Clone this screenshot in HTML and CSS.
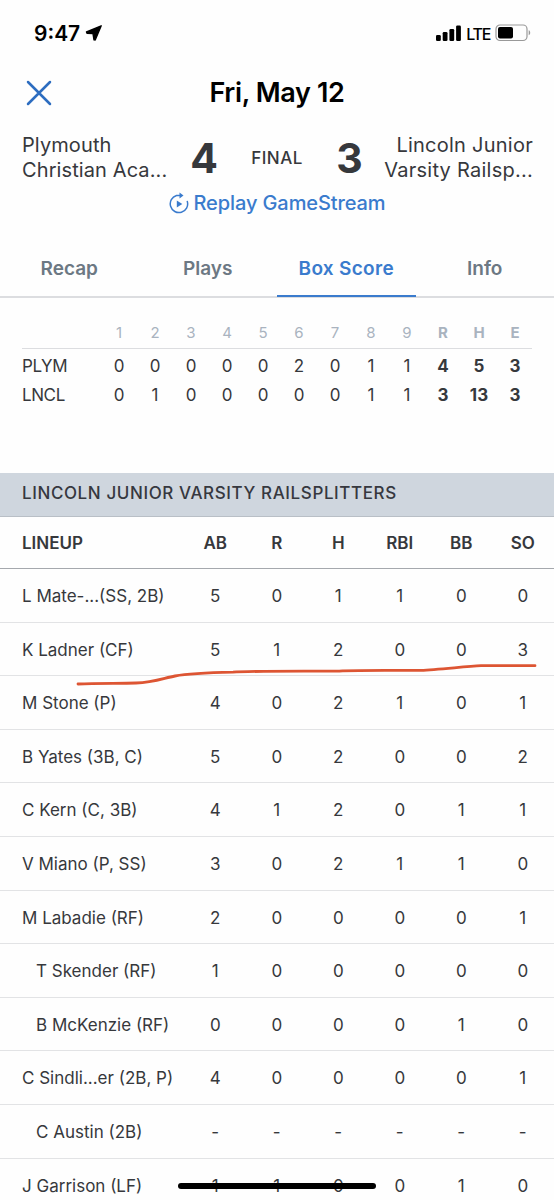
FILE: index.html
```html
<!DOCTYPE html>
<html lang="en">
<head>
    <meta charset="UTF-8">
    <meta name="viewport" content="width=device-width, initial-scale=1.0">
    <title>Box Score</title>
    <link rel="stylesheet" href="styles.css">
</head>
<body>

<div class="screen">
    <div class="status-bar">
        <div class="status-left">
            <span class="time">9:47</span>
            <svg width="18" height="18" viewBox="0 0 18 18"><path d="M16.200 1.800 1.500 8 2 9.300 8 9.600 9 15.900 10.200 16Z" fill="#000" stroke="#000" stroke-width="1.400" stroke-linejoin="round"/></svg>
        </div>
        <div class="status-right">
            <svg width="25" height="16" viewBox="0 0 25 16"><rect x="0" y="10" width="4.800" height="6" rx="1.300"/><rect x="6.700" y="7" width="4.800" height="9" rx="1.300"/><rect x="13.400" y="4" width="4.800" height="12" rx="1.300"/><rect x="20.100" y="0.500" width="4.800" height="15.500" rx="1.300"/></svg>
            <span class="network">LTE</span>
            <svg width="36" height="18" viewBox="0 0 36 18"><rect x="1" y="1" width="31" height="15.500" rx="4" fill="none" stroke="#999" stroke-width="1.200"/><rect x="3" y="3" width="15" height="11.500" rx="2"/><path d="M33.700 6.300c2 .6 2 4.300 0 5z" fill="#999"/></svg>
        </div>
    </div>

    <div class="title-bar">
        <svg class="close" width="26" height="26" viewBox="0 0 26 26"><path d="M2 2 24 24M24 2 2 24" fill="none" stroke="#2d6dc0" stroke-width="2.500" stroke-linecap="round"/></svg>
        <h1>Fri, May 12</h1>
    </div>

    <div class="matchup">
        <div class="team">Plymouth<br>Christian Aca...</div>
        <div class="score">4</div>
        <div class="final">FINAL</div>
        <div class="score">3</div>
        <div class="team home">Lincoln Junior<br>Varsity Railsp...</div>
    </div>

    <div class="replay">
        <svg width="20" height="22" viewBox="0 0 20 22"><path d="M18.300 9.400A8.700 8.700 0 1 1 7.500 3.500H11" fill="none" stroke="#3a7bcd" stroke-width="1.500" stroke-linecap="round"/><path d="M10.500 .5 14.500 3.500 10.500 6.500z" fill="#3a7bcd"/><path d="M7.800 8.500 13.300 12 7.800 15.500z" fill="#3a7bcd"/></svg>
        <span>Replay GameStream</span>
    </div>

    <div class="tabs">
        <div class="tab">Recap</div>
        <div class="tab">Plays</div>
        <div class="tab active">Box Score</div>
        <div class="tab">Info</div>
    </div>

    <div class="linescore">
        <div class="line head"><span></span><span>1</span><span>2</span><span>3</span><span>4</span><span>5</span><span>6</span><span>7</span><span>8</span><span>9</span><b>R</b><b>H</b><b>E</b></div>
        <div class="line"><span class="abbr">PLYM</span><span>0</span><span>0</span><span>0</span><span>0</span><span>0</span><span>2</span><span>0</span><span>1</span><span>1</span><b>4</b><b>5</b><b>3</b></div>
        <div class="line"><span class="abbr">LNCL</span><span>0</span><span>1</span><span>0</span><span>0</span><span>0</span><span>0</span><span>0</span><span>1</span><span>1</span><b>3</b><b>13</b><b>3</b></div>
    </div>

    <div class="section-title">LINCOLN JUNIOR VARSITY RAILSPLITTERS</div>

    <div class="lineup">
        <div class="row head"><span class="player">LINEUP</span><span>AB</span><span>R</span><span>H</span><span>RBI</span><span>BB</span><span>SO</span></div>
        <div class="row"><span class="player">L Mate-...(SS, 2B)</span><span>5</span><span>0</span><span>1</span><span>1</span><span>0</span><span>0</span></div>
        <div class="row"><span class="player">K Ladner (CF)</span><span>5</span><span>1</span><span>2</span><span>0</span><span>0</span><span>3</span></div>
        <div class="row"><span class="player">M Stone (P)</span><span>4</span><span>0</span><span>2</span><span>1</span><span>0</span><span>1</span></div>
        <div class="row"><span class="player">B Yates (3B, C)</span><span>5</span><span>0</span><span>2</span><span>0</span><span>0</span><span>2</span></div>
        <div class="row"><span class="player">C Kern (C, 3B)</span><span>4</span><span>1</span><span>2</span><span>0</span><span>1</span><span>1</span></div>
        <div class="row"><span class="player">V Miano (P, SS)</span><span>3</span><span>0</span><span>2</span><span>1</span><span>1</span><span>0</span></div>
        <div class="row"><span class="player">M Labadie (RF)</span><span>2</span><span>0</span><span>0</span><span>0</span><span>0</span><span>1</span></div>
        <div class="row"><span class="player sub">T Skender (RF)</span><span>1</span><span>0</span><span>0</span><span>0</span><span>0</span><span>0</span></div>
        <div class="row"><span class="player sub">B McKenzie (RF)</span><span>0</span><span>0</span><span>0</span><span>0</span><span>1</span><span>0</span></div>
        <div class="row"><span class="player">C Sindli...er (2B, P)</span><span>4</span><span>0</span><span>0</span><span>0</span><span>0</span><span>1</span></div>
        <div class="row"><span class="player sub">C Austin (2B)</span><span>-</span><span>-</span><span>-</span><span>-</span><span>-</span><span>-</span></div>
        <div class="row"><span class="player">J Garrison (LF)</span><span>1</span><span>1</span><span>0</span><span>0</span><span>1</span><span>0</span></div>

        <svg class="marker" width="462" height="24" viewBox="0 0 462 24"><path d="M2 22C20 21 42 21.500 60 21S88 16 99 14 122 11 157 10.200C170 9 180 9.200 261 9.200 270 8 280 8.300 345 8.300 362 7.500 390 4.500 405 3.700H459" fill="none" stroke="#dd5533" stroke-width="2.800" stroke-linecap="round" stroke-linejoin="round"/></svg>
    </div>

    <div class="home-indicator"></div>
</div>

</body>
</html>
```
FILE: styles.css
```css
* {
    box-sizing: border-box;
}
body {
    margin: 0;
    background: #fefefe;
    color: #36383c;
    font-family: Inter, "Liberation Sans", sans-serif;
}
svg {
    display: block;
    flex: none;
}
.screen {
    position: relative;
    height: 1200px;
    overflow: hidden;
}
.status-bar {
    display: flex;
    justify-content: space-between;
    align-items: center;
    height: 66px;
    padding: 0 23px 0 34px;
    color: #000;
}
.status-left {
    display: flex;
    align-items: center;
    gap: 5px;
}
.time {
    font-size: 21px;
    font-weight: 600;
}
.status-right {
    display: flex;
    align-items: center;
    gap: 5px;
}
.network {
    padding-top: 1px;
    font-size: 16px;
    font-weight: 500;
    letter-spacing: -1.3px;
}
.title-bar {
    position: relative;
    height: 52px;
    text-align: center;
}
.close {
    position: absolute;
    left: 26px;
    top: 14px;
}
h1 {
    margin: 0;
    color: #000;
    font-size: 27px;
    line-height: 54px;
    height: 52px;
    font-weight: 600;
    letter-spacing: -0.35px;
}
.matchup {
    display: grid;
    grid-template-columns: 162px 40px 106px 39px 1fr;
    align-items: center;
    height: 74px;
    padding: 5px 21px 0 22px;
    text-align: center;
}
.team {
    padding-top: 1px;
    font-size: 20px;
    line-height: 25px;
    letter-spacing: 0.1px;
    text-align: left;
    white-space: nowrap;
}
.home {
    letter-spacing: 0.25px;
    text-align: right;
}
.score {
    font-size: 41px;
    line-height: 50px;
    font-weight: 700;
}
.final {
    padding-top: 1px;
    font-size: 17px;
    font-weight: 500;
    letter-spacing: 0.5px;
}
.replay {
    display: flex;
    justify-content: center;
    align-items: center;
    gap: 5px;
    height: 24px;
    margin-top: -1px;
    color: #3a7bcd;
    font-size: 20px;
    font-weight: 500;
    letter-spacing: -0.1px;
}
.tabs {
    display: flex;
    height: 83px;
    border-bottom: 2px solid #dcdde0;
}
.tab {
    flex: 1;
    height: 82px;
    padding-top: 42px;
    color: #6c7883;
    font-size: 19px;
    line-height: 24px;
    font-weight: 600;
    text-align: center;
}
.active {
    color: #3a7bcd;
    border-bottom: 2px solid #3a7bcd;
    letter-spacing: 0.3px;
}
.linescore {
    height: 175px;
    padding: 18px 22px 0;
}
.line {
    display: grid;
    grid-template-columns: 79px repeat(12, 36px);
    height: 29px;
    font-size: 17px;
    line-height: 29px;
    text-align: center;
}
.line b {
    font-weight: 700;
}
.line.head {
    height: 33px;
    margin-bottom: 3px;
    border-bottom: 1px solid #dcdde0;
    color: #a9b3bf;
    font-size: 15px;
    line-height: 34px;
}
.line .abbr {
    text-align: left;
    letter-spacing: -0.4px;
}
.section-title {
    height: 44px;
    padding-left: 22px;
    background: #cfd6de;
    border-bottom: 1px solid #b9bfc6;
    color: #36383f;
    font-size: 17px;
    line-height: 40px;
    font-weight: 500;
    letter-spacing: 0.6px;
}
.lineup {
    position: relative;
}
.row {
    display: grid;
    grid-template-columns: 184.5px repeat(6, 61.5px);
    height: 53.6px;
    border-bottom: 1px solid #e2e3e5;
    font-size: 17px;
    line-height: 55px;
    text-align: center;
}
.row.head {
    height: 52px;
    border-bottom-color: #a5a8ad;
    font-weight: 600;
    line-height: 52px;
}
.player {
    padding-left: 22px;
    text-align: left;
    white-space: nowrap;
}
.sub {
    padding-left: 36px;
}
.marker {
    position: absolute;
    left: 76px;
    top: 145px;
}
.home-indicator {
    position: absolute;
    left: 178px;
    bottom: 11px;
    width: 198px;
    height: 6px;
    border-radius: 3px;
    background: #000;
}
```
